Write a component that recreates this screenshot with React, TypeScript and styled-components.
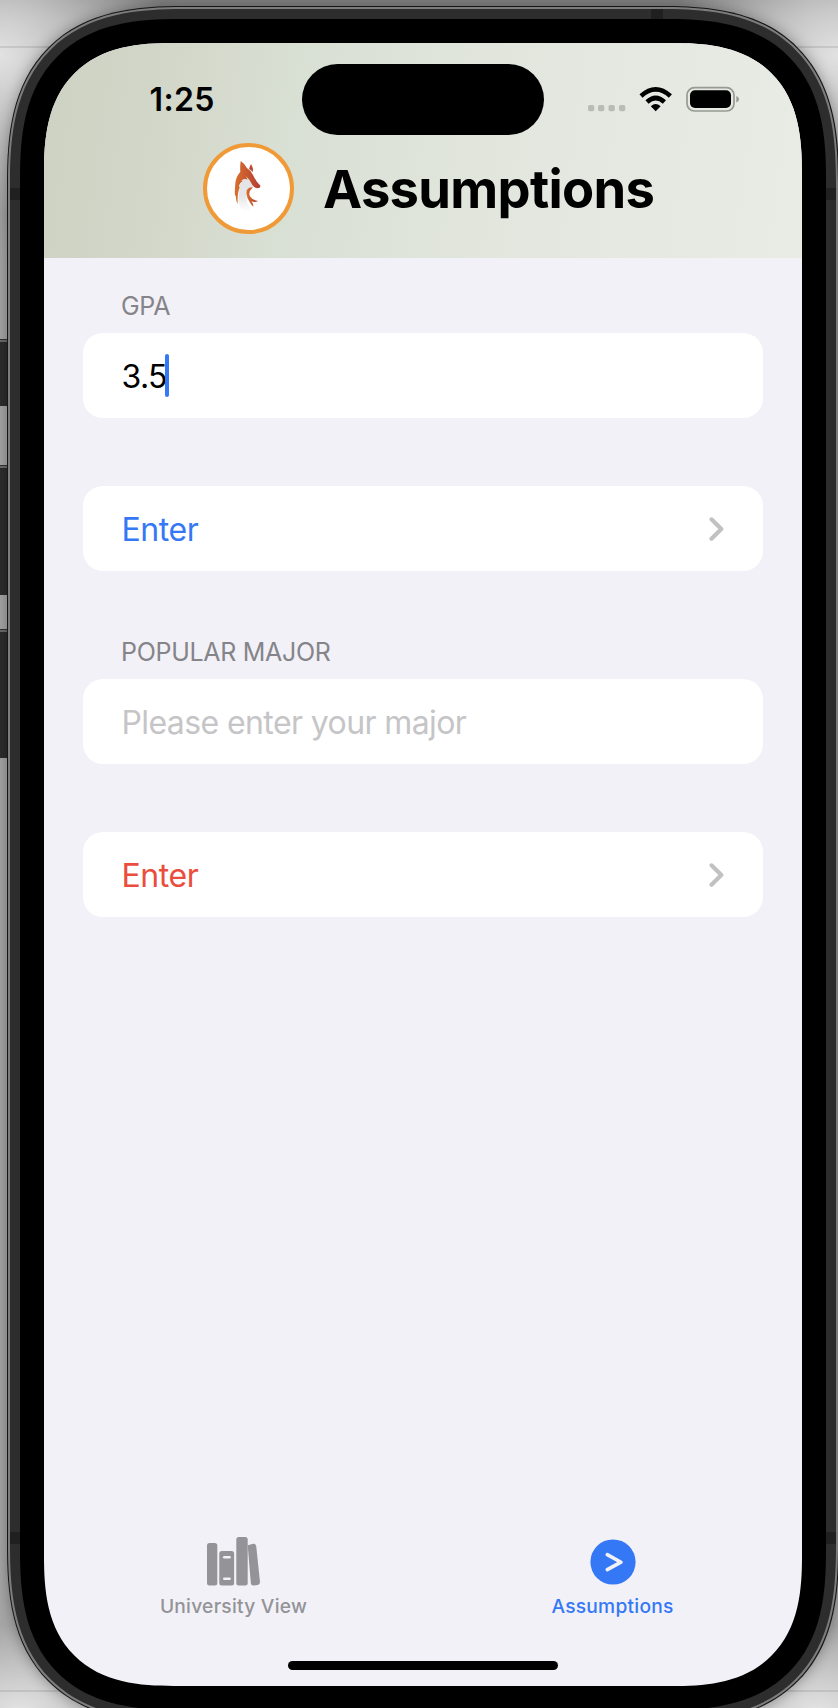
import React from "react";
import styled, { createGlobalStyle, css } from "styled-components";

const Global = createGlobalStyle`
  * { box-sizing: border-box; }
  html, body { margin: 0; padding: 0; overflow: hidden; }
  body { font-family: Inter, "Liberation Sans", sans-serif; color: #000; }
`;

/* Continuous (squircle) corners where the browser has them, plain arcs elsewhere. */
const continuousCorner = (radius: number) => css`
  border-radius: ${radius}px;
  @supports (corner-shape: superellipse(1.38)) {
    border-radius: ${Math.round(radius * 1.24)}px;
    corner-shape: superellipse(1.38);
  }
`;

const Desktop = styled.div`
  position: relative;
  width: 838px;
  height: 1708px;
  overflow: hidden;
  padding: 6px 0 0 7px;
  background:
    linear-gradient(#0000 46px, #00000018 46px, #00000018 48px, #0000 48px, #0000 1690px, #00000018 1690px, #00000018 1692px, #0000 1692px),
    radial-gradient(ellipse 170px 160px at 0 55px, #e2e2e2 0%, #e2e2e200 100%),
    radial-gradient(ellipse 170px 160px at 838px 55px, #e2e2e2 0%, #e2e2e200 100%),
    radial-gradient(ellipse 130px 90px at 20px 1715px, #e6e6e6 0%, #e6e6e600 100%),
    radial-gradient(ellipse 130px 90px at 818px 1715px, #e6e6e6 0%, #e6e6e600 100%),
    linear-gradient(#808080 0, #8c8c8c 20px, #a6a6a6 260px, #a6a6a6 100%);
`;

const SideButton = styled.div<{ $top: number; $height: number }>`
  position: absolute;
  left: 0;
  top: ${(p) => p.$top}px;
  width: 8px;
  height: ${(p) => p.$height}px;
  background: #2d2d2d;
  border-top: 2px solid #6c6c6c;
  box-shadow: 0 -1px 0 #333;
`;

const Shell = styled.div`
  width: 832px;
  height: 1717px;
  ${continuousCorner(143)}
  padding: 1px;
  background: #161616;
  box-shadow: 0 0 14px #00000055;
  position: relative;
`;

const Rim = styled.div`
  height: 100%;
  ${continuousCorner(142)}
  padding: 2px;
  background: #7c7c7c;
`;

const Band = styled.div`
  position: relative;
  height: 100%;
  ${continuousCorner(140)}
  padding: 10px 10px;
  background: #2d2d2d;
`;

const Antenna = styled.div<{ $x: "left" | "right" | "top"; $at: number }>`
  position: absolute;
  background: #202020;
  ${(p) =>
    p.$x === "top"
      ? `top: 0; left: ${p.$at}px; width: 12px; height: 10px;`
      : `${p.$x}: 0; top: ${p.$at}px; width: 10px; height: 12px;`}
`;

const Bezel = styled.div`
  height: 100%;
  ${continuousCorner(129)}
  padding: 24px;
  background: #000;
`;

const Screen = styled.main`
  width: 758px;
  height: 1643px;
  ${continuousCorner(105)}
  overflow: hidden;
  background: #f2f1f7;
  display: flex;
  flex-direction: column;
`;

const Header = styled.header`
  height: 215px;
  flex: none;
  background: linear-gradient(98deg, #cdd2c3 0%, #d1d6c8 14%, #d5dacd 22%, #d8dfd3 32%, #dbe1d6 40%, #e0e5db 52%, #e3e7df 65%, #e6e9e2 80%, #e8ece4 100%);
`;

const StatusBar = styled.div`
  height: 92px;
  padding-top: 21.4px;
  display: grid;
  grid-template-columns: 258px 242px 258px;
`;

const Clock = styled.time`
  padding: 16px 0 0 105.5px;
  font-size: 32px;
  line-height: 40px;
  font-weight: 600;
  letter-spacing: 0.4px;
`;

const Island = styled.div`
  height: 71px;
  border-radius: 36px;
  background: #000;
`;

const StatusIcons = styled.div`
  height: 71px;
  padding-left: 43px;
  svg { display: block; }
`;

const TitleRow = styled.div`
  display: flex;
  align-items: center;
  padding: 8px 0 0 159.4px;
  gap: 28.6px;
`;

const Avatar = styled.div`
  width: 91px;
  height: 91px;
  border: 4px solid #f09a37;
  border-radius: 50%;
  background: #fff;
  svg { display: block; }
`;

const Title = styled.h1`
  margin: 0;
  padding-top: 1px;
  font-size: 52.5px;
  line-height: 64px;
  font-weight: 700;
  letter-spacing: -0.7px;
`;

const Form = styled.form`
  flex: 1;
  padding: 33px 39px 0;
`;

const Section = styled.section<{ $gap: number }>`
  margin-bottom: ${(p) => p.$gap}px;
`;

const Label = styled.label`
  display: block;
  height: 42px;
  padding-left: 38px;
  font-size: 25px;
  line-height: 31px;
  letter-spacing: -0.3px;
  color: #858489;
`;

const Cell = styled.div<{ $color?: string; $tracking?: number }>`
  display: flex;
  align-items: center;
  height: 84.5px;
  padding: 3px 39px 0 38.5px;
  border-radius: 20px;
  background: #fff;
  font-size: 32px;
  line-height: 40px;
  letter-spacing: ${(p) => p.$tracking ?? -0.6}px;
  color: ${(p) => p.$color ?? "#000"};
  svg { margin: -2px 0 0 auto; display: block; }
`;

const Caret = styled.span`
  width: 4px;
  height: 43px;
  margin: -3px 0 0 -1.5px;
  border-radius: 2px;
  background: #3478f6;
`;

const TabBar = styled.nav`
  height: 125.5px;
  flex: none;
  display: grid;
  grid-template-columns: 1fr 1fr;
`;

const Tab = styled.div<{ $active?: boolean }>`
  display: flex;
  flex-direction: column;
  align-items: center;
  color: ${(p) => (p.$active ? "#3478f6" : "#949398")};
  font-size: 19.2px;
  line-height: 24px;
  font-weight: 500;
  letter-spacing: 0.25px;
  svg { display: block; margin-bottom: 8px; }
`;

const HomeIndicator = styled.div`
  width: 270px;
  height: 9px;
  flex: none;
  margin: 0 auto 16px;
  border-radius: 5px;
  background: #000;
`;

const Fox = () => (
  <svg width="83" height="83" viewBox="207.5 147.5 83 83">
    <defs>
      <linearGradient id="fur" x1="0" x2="1">
        <stop offset="0" stopColor="#d9702d" />
        <stop offset="1" stopColor="#b33d33" />
      </linearGradient>
      <linearGradient id="chest" x1="0" x2="0" y1="0" y2="1">
        <stop offset="0" stopColor="#e4e4e6" />
        <stop offset="0.55" stopColor="#e6e6e8" />
        <stop offset="1" stopColor="#fff" />
      </linearGradient>
    </defs>
    <path d="M240 186 Q243 179 248.5 178 Q252 181 254 187 Q246 188 246.7 195 Q247.5 206 251 210 Q245 215 240.5 208 Q238 201 239.5 193Z" fill="url(#chest)" />
    <path d="M241.2 161.6 Q244.8 164 247.4 168.4 Q251.8 171 253.8 176 Q256.2 181.8 260.8 186 Q261.2 188.6 257.6 188.8 Q254.4 188.2 252.8 185.6 Q251 180.4 246.6 177 L248 180 Q244.8 178.4 241.6 181 L243.6 181.2 Q239.6 183.4 239.4 187.6 L240.4 187.2 Q237.6 193 238.2 204.4 Q236.2 201.6 236.5 197.2 L235.4 195.2 Q235.2 190 235.8 184 Q236.4 177 240.8 172.6 Q240.4 167 241.2 161.6Z" fill="url(#fur)" />
    <path d="M251.6 164.6 Q253.8 168 253.6 172.6 L249.6 169.4 Q250.2 166.6 251.6 164.6Z" fill="#bf4934" />
    <path d="M253.4 187.8 Q246.4 187.6 246.9 194.2 Q247.4 199 250.4 203 Q252 205.6 254 207.2 Q253.8 204.2 252 201.8 Q255 203.4 258.6 201.4 Q252.6 200.6 250.4 196.8 Q248.4 192.4 253.4 187.8Z" fill="url(#fur)" />
  </svg>
);

const Chevron = () => (
  <svg width="15" height="24" viewBox="0 0 15 24" fill="none" stroke="#c1c1c3" strokeWidth="4.1" strokeLinecap="round" strokeLinejoin="round">
    <path d="M2.5 2.3 L12.3 12 L2.5 21.7" />
  </svg>
);

const Status = () => (
  <svg width="160" height="71" viewBox="587 64 160 71">
    <g fill="#b9bcb5">
      {[588, 598, 608.5, 619].map((x) => (
        <rect key={x} x={x} y="105" width="6.3" height="6.3" rx="1.8" />
      ))}
    </g>
    <g fill="none" stroke="#000" strokeWidth="4.6">
      <path d="M641 96 Q655.7 82.6 670.4 96" />
      <path d="M647 102 Q655.7 94 664.4 102" />
    </g>
    <path d="M650.8 106.3 Q655.7 101.7 660.6 106.3 L655.7 111.3Z" />
    <rect x="687" y="87.7" width="47" height="23.3" rx="7.5" fill="none" stroke="#979a93" strokeWidth="1.7" />
    <rect x="690" y="90.3" width="41" height="17.7" rx="5" />
    <path d="M736.3 96 Q739 97 739 99.2 Q739 101.5 736.3 102.5Z" fill="#979a93" />
  </svg>
);

const Books = () => (
  <svg width="56" height="50" viewBox="206 1536 56 50">
    <g fill="currentColor">
      <rect x="207" y="1543" width="10.3" height="42.5" rx="2.5" />
      <rect x="219.3" y="1551" width="14.8" height="34.5" rx="2.5" />
      <rect x="236.3" y="1537" width="11.4" height="48.5" rx="2.5" />
      <path d="M247.7 1545.2 L253.3 1543.8 Q255.8 1543.6 256.2 1546 L260 1582 Q260 1584.5 257.8 1585 L253.4 1585.5 Q251 1585.5 250.8 1583Z" />
    </g>
    <g fill="#f2f1f7">
      <rect x="223" y="1556" width="7.8" height="2.5" rx="1.2" />
      <rect x="223" y="1577.5" width="7.8" height="2.5" rx="1.2" />
    </g>
  </svg>
);

const ArrowBadge = () => (
  <svg width="46" height="50" viewBox="0 0 46 50">
    <circle cx="23" cy="26" r="22.6" fill="currentColor" />
    <path d="M17.3 18.6 L31 26.2 L17.3 33.6" fill="none" stroke="#f2f1f7" strokeWidth="3.6" strokeLinecap="round" strokeLinejoin="round" />
  </svg>
);

export default function App() {
  return (
    <>
      <Global />
      <Desktop>
        <SideButton $top={340} $height={66} />
        <SideButton $top={466} $height={129} />
        <SideButton $top={630} $height={128} />
        <Shell>
          <Rim>
            <Band>
              <Antenna $x="top" $at={641} />
              <Antenna $x="left" $at={179} />
              <Antenna $x="right" $at={179} />
              <Antenna $x="left" $at={1523} />
              <Antenna $x="right" $at={1523} />
              <Bezel>
                <Screen>
                  <Header>
                    <StatusBar>
                      <Clock>1:25</Clock>
                      <Island />
                      <StatusIcons><Status /></StatusIcons>
                    </StatusBar>
                    <TitleRow>
                      <Avatar><Fox /></Avatar>
                      <Title>Assumptions</Title>
                    </TitleRow>
                  </Header>
                  <Form>
                    <Section $gap={68.5}>
                      <Label>GPA</Label>
                      <Cell>3.5<Caret /></Cell>
                    </Section>
                    <Section $gap={66.5}>
                      <Cell $color="#3478f6" $tracking={-0.4}>Enter<Chevron /></Cell>
                    </Section>
                    <Section $gap={68.5}>
                      <Label>POPULAR MAJOR</Label>
                      <Cell $color="#c5c5c7">Please enter your major</Cell>
                    </Section>
                    <Section $gap={0}>
                      <Cell $color="#eb4d3d" $tracking={-0.4}>Enter<Chevron /></Cell>
                    </Section>
                  </Form>
                  <TabBar>
                    <Tab><Books />University View</Tab>
                    <Tab $active><ArrowBadge />Assumptions</Tab>
                  </TabBar>
                  <HomeIndicator />
                </Screen>
              </Bezel>
            </Band>
          </Rim>
        </Shell>
      </Desktop>
    </>
  );
}
